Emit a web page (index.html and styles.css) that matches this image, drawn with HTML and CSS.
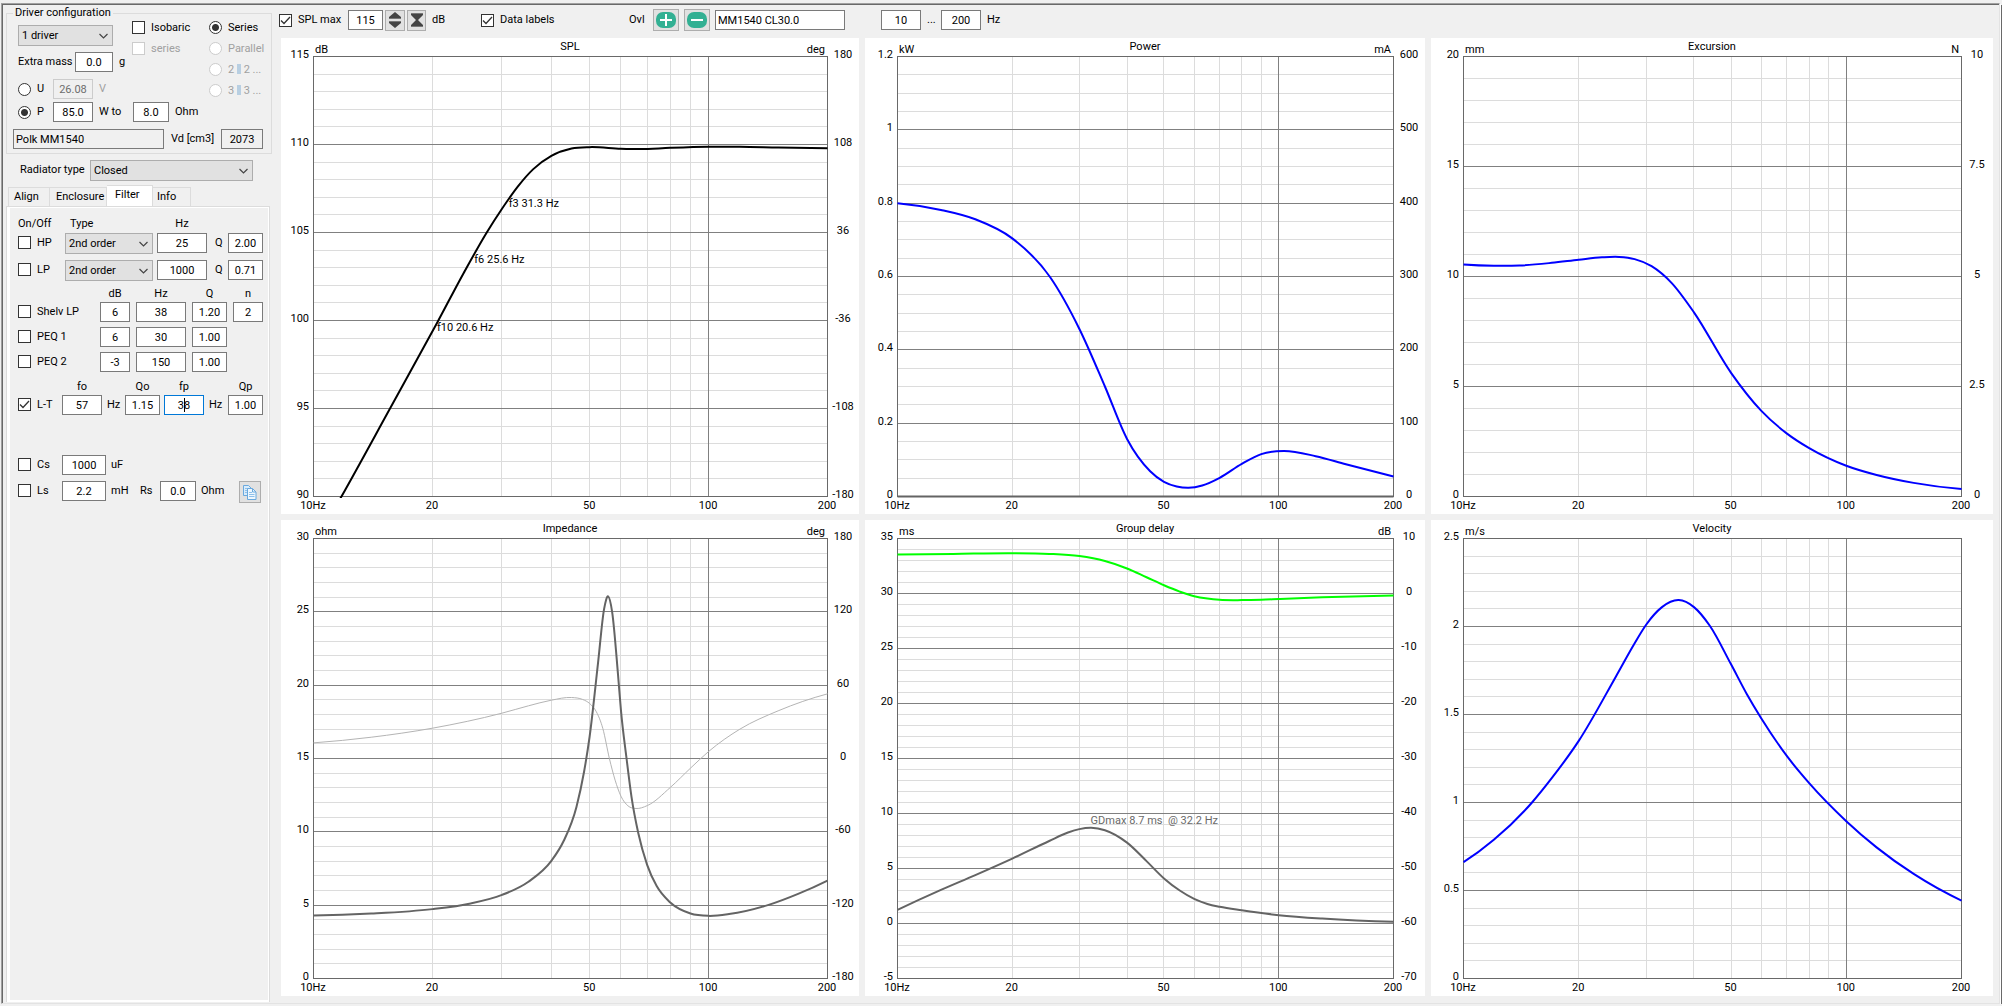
FILE: index.html
```html
<!DOCTYPE html>
<html lang="en">
<head>
    <meta charset="UTF-8">
    <meta name="viewport" content="width=device-width, initial-scale=1.0">
    <title>Speaker box simulator</title>
    <link rel="stylesheet" href="styles.css">
</head>
<body>
    <div class="window">
        <!-- Left side: driver settings and filter tab -->
        <aside class="sidebar">
            <fieldset class="driver">
                <legend>Driver configuration</legend>
                <div class="driver-top">
                    <div class="driver-main">
                        <div class="driver-head">
                            <div class="driver-count">
                                <select class="w-95" aria-label="Drivers"><option>1 driver</option></select>
                                <div class="row">
                                    <label class="mass-label" for="mass">Extra mass</label>
                                    <input class="box w-38" type="text" id="mass" value="0.0">
                                    <span class="unit">g</span>
                                </div>
                            </div>
                            <div class="stack">
                                <label class="check"><input type="checkbox">Isobaric</label>
                                <label class="check off"><input type="checkbox" disabled>series</label>
                            </div>
                        </div>
                        <div class="row level">
                            <label class="check w-35"><input type="radio" name="level">U</label>
                            <input class="box w-40" type="text" value="26.08" aria-label="Voltage" disabled>
                            <span class="unit off">V</span>
                        </div>
                        <div class="row power">
                            <label class="check w-35"><input type="radio" name="level" checked>P</label>
                            <input class="box w-40" type="text" value="85.0" aria-label="Power">
                            <span class="unit w-40">W to</span>
                            <input class="box w-36" type="text" value="8.0" aria-label="Load">
                            <span class="unit">Ohm</span>
                        </div>
                    </div>
                    <div class="stack">
                        <label class="check"><input type="radio" name="wiring" checked>Series</label>
                        <label class="check off"><input type="radio" name="wiring" disabled>Parallel</label>
                        <label class="check off"><input type="radio" name="wiring" disabled><span>2 <i class="bars"></i> 2 ...</span></label>
                        <label class="check off"><input type="radio" name="wiring" disabled><span>3 <i class="bars"></i> 3 ...</span></label>
                    </div>
                </div>
                <div class="row driver-name">
                    <input class="box readonly wide" type="text" value="Polk MM1540" aria-label="Driver name" readonly>
                    <label for="vd">Vd [cm3]</label>
                    <input class="box readonly w-42" type="text" id="vd" value="2073" readonly>
                </div>
            </fieldset>

            <div class="row radiator">
                <label for="radiator">Radiator type</label>
                <select class="w-163" id="radiator"><option>Closed</option></select>
            </div>

            <div class="tabs" role="tablist">
                <button class="tab" role="tab">Align</button>
                <button class="tab" role="tab">Enclosure</button>
                <button class="tab active" role="tab">Filter</button>
                <button class="tab" role="tab">Info</button>
            </div>

            <div class="tab-page">
                <div class="grid pass">
                    <span class="head start">On/Off</span><span class="head type">Type</span>
                    <span class="head">Hz</span><span></span><span></span>

                    <label class="check"><input type="checkbox">HP</label>
                    <select class="w-88" aria-label="HP type"><option>2nd order</option></select>
                    <input class="box" type="text" value="25" aria-label="HP Hz">
                    <label class="q" for="hpq">Q</label>
                    <input class="box" type="text" id="hpq" value="2.00">

                    <label class="check"><input type="checkbox">LP</label>
                    <select class="w-88" aria-label="LP type"><option>2nd order</option></select>
                    <input class="box" type="text" value="1000" aria-label="LP Hz">
                    <label class="q" for="lpq">Q</label>
                    <input class="box" type="text" id="lpq" value="0.71">
                </div>

                <div class="grid peq">
                    <span></span><span class="head">dB</span><span class="head">Hz</span>
                    <span class="head">Q</span><span class="head">n</span>

                    <label class="check"><input type="checkbox">Shelv LP</label>
                    <input class="box" type="text" value="6" aria-label="Shelv dB">
                    <input class="box" type="text" value="38" aria-label="Shelv Hz">
                    <input class="box" type="text" value="1.20" aria-label="Shelv Q">
                    <input class="box" type="text" value="2" aria-label="Shelv n">

                    <label class="check"><input type="checkbox">PEQ 1</label>
                    <input class="box" type="text" value="6" aria-label="PEQ 1 dB">
                    <input class="box" type="text" value="30" aria-label="PEQ 1 Hz">
                    <input class="box" type="text" value="1.00" aria-label="PEQ 1 Q">
                    <span></span>

                    <label class="check"><input type="checkbox">PEQ 2</label>
                    <input class="box" type="text" value="-3" aria-label="PEQ 2 dB">
                    <input class="box" type="text" value="150" aria-label="PEQ 2 Hz">
                    <input class="box" type="text" value="1.00" aria-label="PEQ 2 Q">
                    <span></span>
                </div>

                <div class="grid linkwitz">
                    <span></span><label class="head" for="fo">fo</label><span></span>
                    <label class="head" for="qo">Qo</label><span></span><label class="head" for="fp">fp</label>
                    <span></span><label class="head" for="qp">Qp</label>

                    <label class="check"><input type="checkbox" checked>L-T</label>
                    <input class="box" type="text" id="fo" value="57">
                    <span class="unit">Hz</span>
                    <input class="box" type="text" id="qo" value="1.15">
                    <span></span>
                    <span class="editing"><input class="box" type="text" id="fp" value="38"></span>
                    <span class="unit">Hz</span>
                    <input class="box" type="text" id="qp" value="1.00">
                </div>

                <div class="grid passive">
                    <label class="check"><input type="checkbox">Cs</label>
                    <input class="box" type="text" value="1000" aria-label="Cs">
                    <span class="unit">uF</span>
                    <span></span><span></span><span></span><span></span>

                    <label class="check"><input type="checkbox">Ls</label>
                    <input class="box" type="text" value="2.2" aria-label="Ls">
                    <span class="unit">mH</span>
                    <label for="rs">Rs</label>
                    <input class="box" type="text" id="rs" value="0.0">
                    <span class="unit">Ohm</span>
                    <button class="tool copy" aria-label="Copy">
                        <svg width="16" height="16" viewBox="0 0 16 16">
                            <path d="M1.5 1.5h5l3 3v7h-8z" fill="#d9ecfb" stroke="#6aa9de"/>
                            <path d="M3 4.5h3M3 6.5h3M3 8.5h3" stroke="#8fc0ea"/>
                            <path d="M5.5 4.5h5l3.5 3.5v7.5h-8.5z" fill="#eef7fe" stroke="#6aa9de"/>
                            <path d="M10.5 4.5v3.500h3.500" fill="none" stroke="#6aa9de"/>
                            <path d="M7 8.500h3M7 10.500h5.500M7 12.500h5.500" stroke="#8fc0ea"/>
                        </svg>
                    </button>
                </div>
            </div>
        </aside>

        <!-- Right side: toolbar and graphs -->
        <main class="main">
            <div class="toolbar">
                <label class="check splmax"><input type="checkbox" checked>SPL max</label>
                <input class="box w-35" type="text" value="115" aria-label="SPL max value">
                <button class="tool spin" aria-label="Step">
                    <svg width="14" height="16" viewBox="0 0 14 16"><path d="M7 0l6 5v2H1V5zM7 16l6-5V9H1v2z" fill="#444"/><path d="M1 6.500h12M1 9.500h12" stroke="#777"/></svg>
                </button>
                <button class="tool fit" aria-label="Fit">
                    <svg width="14" height="16" viewBox="0 0 14 16"><path d="M1 1h12v2L8 8l5 5v2H1v-2l5-5-5-5z" fill="#444"/><path d="M1 1.500h12M1 14.500h12" stroke="#777"/></svg>
                </button>
                <span class="db">dB</span>
                <label class="check datalabels"><input type="checkbox" checked>Data labels</label>
                <span class="ovl">Ovl</span>
                <button class="tool round" aria-label="Add overlay">
                    <svg width="20" height="16" viewBox="0 0 20 16"><rect width="20" height="16" rx="7" fill="#32b093"/><path d="M10 2v12M4 8h12" stroke="#fff" stroke-width="2"/></svg>
                </button>
                <button class="tool round" aria-label="Remove overlay">
                    <svg width="20" height="16" viewBox="0 0 20 16"><rect width="20" height="16" rx="7" fill="#32b093"/><path d="M4 8h12" stroke="#fff" stroke-width="2"/></svg>
                </button>
                <input class="box overlay-name" type="text" value="MM1540 CL30.0" aria-label="Overlay name">
                <input class="box w-40" type="text" value="10" aria-label="From Hz">
                <span class="dots">...</span>
                <input class="box w-40" type="text" value="200" aria-label="To Hz">
                <span class="unit">Hz</span>
            </div>
            <div class="charts">
                <svg class="chart" id="spl"></svg>
                <svg class="chart" id="power"></svg>
                <svg class="chart" id="excursion"></svg>
                <svg class="chart" id="impedance"></svg>
                <svg class="chart" id="delay"></svg>
                <svg class="chart" id="velocity"></svg>
            </div>
        </main>
    </div>
    <script src="charts.js"></script>
</body>
</html>
```
FILE: styles.css
```css
* {
    box-sizing: border-box;
}
body {
    margin: 0;
    background-color: #f0f0f0;
    color: #000;
}
body, input, select, button {
    font-family: Roboto, "Liberation Sans", sans-serif;
    font-size: 11px;
    line-height: 16px;
}
.window {
    display: flex;
    height: calc(100vh - 5px);
    min-height: 560px;
    margin: 3px 2px 0 1px;
    padding: 1px;
    border: 1px solid;
    border-color: #a0a0a0 #e3e3e3 #e3e3e3 #a0a0a0;
    box-shadow: inset 1px 1px #696969, 1px 1px #fff, 2px 2px #696969;
}

/* Form controls */
.box {
    width: 100%;
    height: 20px;
    padding: 0;
    border: 1px solid #7a7a7a;
    border-radius: 0;
    background-color: #fff;
    color: #000;
    text-align: center;
}
.box.readonly {
    background-color: #f0f0f0;
}
.box:disabled {
    border-color: #ccc;
    background-color: #f0f0f0;
    color: #6d6d6d;
}
select {
    appearance: none;
    height: 21px;
    padding: 0 18px 0 3px;
    border: 1px solid #adadad;
    border-radius: 0;
    background: #e1e1e1 url("data:image/svg+xml,%3Csvg xmlns='http://www.w3.org/2000/svg' width='9' height='6'%3E%3Cpath d='M.5 1l4 4 4-4' fill='none' stroke='%23444' stroke-width='1.200'/%3E%3C/svg%3E") no-repeat right 4px center;
    color: #000;
}
.check {
    display: flex;
    align-items: center;
    gap: 6px;
    height: 13px;
    white-space: nowrap;
}
.check input {
    appearance: none;
    flex: none;
    width: 13px;
    height: 13px;
    margin: 0;
    border: 1px solid #333;
    background: #fff no-repeat center;
}
.check input[type="radio"] {
    border-radius: 50%;
}
.check input[type="checkbox"]:checked {
    background-image: url("data:image/svg+xml,%3Csvg xmlns='http://www.w3.org/2000/svg' width='11' height='11'%3E%3Cpath d='M1 5.500l3 3L10 2' fill='none' stroke='%23333' stroke-width='1.300'/%3E%3C/svg%3E");
}
.check input[type="radio"]:checked {
    background-image: radial-gradient(circle, #333 3px, #fff 4px);
}
.check input:disabled {
    border-color: #ccc;
}
.off {
    color: #a0a0a0;
}
.bars {
    display: inline-block;
    width: 4px;
    height: 10px;
    background-color: #b8cfe2;
    vertical-align: -1px;
}
.row {
    display: flex;
}
.row > label, .row > span {
    line-height: 20px;
    height: 20px;
    white-space: nowrap;
}
.unit {
    padding-left: 6px;
    white-space: nowrap;
}
.w-35 { width: 35px; flex: none; }
.w-36 { width: 36px; flex: none; }
.w-38 { width: 38px; flex: none; }
.w-40 { width: 40px; flex: none; }
.w-42 { width: 42px; flex: none; }
.w-88 { width: 88px; }
.w-95 { width: 95px; }
.w-163 { width: 163px; }
.tool {
    display: flex;
    align-items: center;
    justify-content: center;
    flex: none;
    padding: 0;
    border: 1px solid #adadad;
    background-color: #e1e1e1;
}

/* Sidebar */
.sidebar {
    display: flex;
    flex-direction: column;
    flex: none;
    width: 276px;
    padding-left: 3px;
}
.driver {
    width: 266px;
    margin: 0;
    padding: 0 0 4px 6px;
    border: 1px solid #dcdcdc;
}
.driver legend {
    padding: 0 2px;
}
.driver-top {
    display: flex;
    padding-left: 5px;
}
.driver-main {
    width: 191px;
}
.driver-head {
    display: flex;
}
.driver-count {
    display: flex;
    flex-direction: column;
    gap: 6px;
    width: 114px;
    padding-top: 4px;
}
.mass-label {
    width: 57px;
}
.stack {
    display: flex;
    flex-direction: column;
    gap: 8px;
}
.level {
    margin-top: 7px;
}
.power {
    margin-top: 3px;
}
.driver-name {
    justify-content: space-between;
    margin-top: 7px;
    padding-right: 8px;
}
.wide {
    width: 151px;
    padding-left: 2px;
    text-align: left;
}
.radiator {
    margin-top: 6px;
    padding-left: 14px;
}
.radiator label {
    width: 70px;
}
.tabs {
    display: flex;
    align-items: flex-end;
    margin-top: 4px;
    padding-left: 2px;
}
.tab {
    height: 19px;
    border: 1px solid #dcdcdc;
    border-width: 1px 1px 0 0;
    background-color: #f0f0f0;
    color: #000;
    text-align: left;
}
.tab:nth-child(1) { width: 42px; border-left-width: 1px; padding: 0 5px; }
.tab:nth-child(2) { width: 57px; padding: 0 6px; }
.tab:nth-child(3) { width: 46px; padding: 0 8px; }
.tab:nth-child(4) { width: 38px; padding: 0 4px; }
.tab.active {
    height: 21px;
    background-color: #fff;
    padding-bottom: 3px;
}
.tab-page {
    flex: 1;
    width: 264px;
    padding: 9px 6px 0 11px;
    border: 1px solid #dcdcdc;
    border-bottom: 0;
    box-shadow: inset 3px 1px #fff, inset -1px -2px #fff;
}
.grid {
    display: grid;
    align-items: start;
}
.grid > .check {
    height: 19px;
}
.grid > .unit {
    padding-left: 5px;
    line-height: 20px;
}
.head {
    text-align: center;
}
.head.start {
    text-align: left;
}
.head.type {
    padding-left: 5px;
    text-align: left;
}
.pass {
    grid-template-columns: 47px 92px 50px 21px 35px;
    grid-template-rows: 17px 21px 21px;
}
.pass > :nth-child(n+11) {
    margin-top: 6px;
}
.q {
    padding-left: 8px;
    line-height: 20px;
}
.peq {
    grid-template-columns: 76px 30px 50px 35px 30px;
    grid-template-rows: 11px;
    gap: 5px 6px;
    margin-top: 11px;
}
.linkwitz {
    grid-template-columns: 44px 40px 23px 35px 4px 40px 24px 35px;
    margin-top: 7px;
}
.editing {
    position: relative;
}
.editing .box {
    display: block;
    border-color: #0078d7;
}
.editing::after {
    content: "";
    position: absolute;
    left: 20px;
    top: 3px;
    width: 1px;
    height: 14px;
    background-color: #000;
}
.passive {
    grid-template-columns: 44px 44px 34px 20px 36px 43px 22px;
    row-gap: 6px;
    margin-top: 40px;
}
.passive label {
    line-height: 20px;
}
.copy {
    width: 22px;
    height: 22px;
}

/* Toolbar */
.main {
    display: flex;
    flex-direction: column;
    flex: 1;
    min-width: 0;
}
.toolbar {
    display: flex;
    align-items: center;
    height: 33px;
    padding-bottom: 3px;
    white-space: nowrap;
}
.splmax {
    width: 69px;
}
.spin {
    width: 20px;
    height: 21px;
    margin-left: 2px;
}
.fit {
    width: 19px;
    height: 21px;
    margin: 0 6px 0 2px;
}
.db {
    width: 49px;
}
.datalabels {
    width: 148px;
}
.ovl {
    width: 24px;
}
.round {
    width: 26px;
    height: 22px;
    margin-right: 5px;
}
.overlay-name {
    width: 130px;
    margin-right: 36px;
    padding-left: 2px;
    text-align: left;
}
.dots {
    width: 20px;
    padding-left: 6px;
}

/* Graphs */
.charts {
    display: grid;
    flex: 1;
    min-height: 0;
    grid-template-columns: 578fr 560fr 562fr;
    grid-template-rows: 1fr 1fr;
    gap: 6px;
    padding: 0 5px 6px 2px;
}
.chart {
    display: block;
    width: 100%;
    height: 100%;
    min-width: 0;
    min-height: 0;
    background-color: #fff;
}
.chart text {
    fill: #000;
}
.chart .note-gray {
    fill: #696969;
}
.chart path, .chart rect {
    fill: none;
}
.minor {
    stroke: #dcdcdc;
}
.major {
    stroke: #808080;
}
.frame {
    stroke: #696969;
}
.black { stroke: #000; stroke-width: 2; }
.blue { stroke: #0000ff; stroke-width: 2; }
.green { stroke: #00ff00; stroke-width: 2; }
.gray { stroke: #646464; stroke-width: 2; }
.thin { stroke: #b4b4b4; stroke-width: 1; }
```
FILE: charts.js
```js
const FMIN = 10;
const FMAX = 200;
const PAD = { top: 18, right: 32, bottom: 18, left: 32 };

// Curve points are [frequency, value on the curve's own axis]
const charts = {
    spl: {
        title: "SPL", units: ["dB", "deg"], min: 90, max: 115, major: 5, minor: 1,
        right: [180, 108, 36, -36, -108, -180],
        curves: [{ cls: "black", pts: [[11.5, 89.6], [11.77, 90], [15.62, 95], [20.59, 99.9], [24, 102.7], [27.45, 105], [30, 106.35], [33, 107.65], [36, 108.6], [40, 109.35], [45, 109.77], [50, 109.85], [60, 109.76], [67, 109.74], [80, 109.81], [100, 109.87], [120, 109.87], [150, 109.83], [200, 109.79]] }],
        notes: [[31.3, 106.8, 3, "f3 31.3 Hz"], [25.6, 103.7, 4, "f6 25.6 Hz"], [20.6, 99.8, 3, "f10 20.6 Hz"]]
    },
    power: {
        title: "Power", units: ["kW", "mA"], min: 0, max: 1.2, major: 0.2, minor: 0.05,
        right: [600, 500, 400, 300, 200, 100, 0],
        curves: [
            { cls: "gray", pts: [[10, 0], [200, 0]] },
            { cls: "blue", pts: [[10, 0.8], [13, 0.7815], [16, 0.756], [20, 0.704], [25.15, 0.598], [30, 0.457], [35, 0.3], [40, 0.157], [46, 0.069], [50, 0.04], [54, 0.0273], [58, 0.0237], [63, 0.03], [70, 0.051], [80, 0.089], [90, 0.1157], [103, 0.124], [125, 0.11], [150, 0.088], [200, 0.0546]] }
        ]
    },
    excursion: {
        title: "Excursion", units: ["mm", "N"], min: 0, max: 20, major: 5, minor: 1,
        right: [10, 7.5, 5, 2.5, 0],
        curves: [{ cls: "blue", pts: [[10, 10.55], [12, 10.49], [14, 10.5], [17, 10.62], [20, 10.76], [23, 10.87], [25.5, 10.89], [28, 10.79], [31, 10.47], [35, 9.7], [40, 8.37], [50, 5.62], [60, 3.89], [70, 2.86], [80, 2.2], [100, 1.4], [120, 0.98], [150, 0.62], [200, 0.34]] }]
    },
    impedance: {
        title: "Impedance", units: ["ohm", "deg"], min: 0, max: 30, major: 5, minor: 1,
        right: [180, 120, 60, 0, -60, -120, -180],
        curves: [
            { cls: "thin", min: -180, max: 180, pts: [[10, 12.8], [14, 17.4], [20, 24.8], [30, 37.1], [35, 43.1], [40, 47.7], [45, 49.9], [48, 48.3], [50, 45], [52, 38.2], [54, 24.5], [56.1, 0], [58, -17.7], [60, -30.8], [62.5, -38.7], [65.5, -40.9], [70, -38.5], [80, -23.7], [90, -7.9], [100, 5.7], [120, 24], [150, 39], [200, 52.9]] },
            { cls: "gray", pts: [[10, 4.3], [14, 4.43], [20, 4.73], [25, 5.12], [30, 5.7], [35, 6.6], [40, 8.02], [43, 9.39], [46.3, 11.7], [48.4, 14.1], [50, 16.5], [52.5, 21.5], [54.4, 25.2], [55.7, 26.05], [57, 25], [59, 20.7], [60, 18.3], [62, 15], [63.8, 12.4], [66.4, 9.9], [69.9, 7.75], [73.9, 6.3], [80, 5.18], [90, 4.43], [100, 4.27], [112.7, 4.39], [141.9, 5.02], [168.5, 5.77], [200, 6.68]] }
        ]
    },
    delay: {
        title: "Group delay", units: ["ms", "dB"], min: -5, max: 35, major: 5, minor: 1,
        right: [10, 0, -10, -20, -30, -40, -50, -60, -70],
        curves: [
            { cls: "green", min: -70, max: 10, pts: [[10, 7.09], [14, 7.2], [20, 7.33], [25, 7.2], [30, 6.8], [35, 5.9], [40, 4.55], [45, 2.95], [50, 1.5], [55, 0.35], [60, -0.5], [65, -0.93], [70, -1.15], [80, -1.2], [90, -1.13], [100, -1], [130, -0.7], [200, -0.36]] },
            { cls: "gray", pts: [[10, 1.24], [13, 3.05], [16, 4.4], [20, 5.9], [25, 7.5], [28, 8.27], [30, 8.58], [32.2, 8.7], [35, 8.48], [40, 7.35], [45, 5.67], [50, 4.1], [55, 3], [60, 2.24], [65, 1.78], [70, 1.52], [80, 1.2], [100, 0.76], [130, 0.45], [160, 0.28], [200, 0.16]] }
        ],
        notes: [[32.2, 8.7, -7, "GDmax 8.7 ms \u00a0@ 32.2 Hz", "note-gray"]]
    },
    velocity: {
        title: "Velocity", units: ["m/s", ""], min: 0, max: 2.5, major: 0.5, minor: 0.1,
        right: [],
        curves: [{ cls: "blue", pts: [[10, 0.661], [12, 0.788], [15.1, 1], [17, 1.138], [20, 1.35], [25, 1.715], [28, 1.905], [30, 2.01], [33, 2.11], [36.5, 2.15], [40, 2.11], [44, 2.004], [50, 1.785], [55, 1.615], [60, 1.477], [70, 1.263], [80, 1.11], [100, 0.894], [120, 0.745], [150, 0.594], [200, 0.443]] }]
    }
};

function add(svg, tag, attrs, text) {
    const el = document.createElementNS("http://www.w3.org/2000/svg", tag);
    for (const key in attrs) el.setAttribute(key, attrs[key]);
    if (text !== undefined) el.textContent = text;
    svg.appendChild(el);
}

// Smooth path through the points, slopes weighted by the distance to each neighbour
function smooth(p) {
    const n = p.length - 1;
    const gap = [], slope = [];
    for (let i = 0; i < n; i++) {
        gap[i] = p[i + 1][0] - p[i][0];
        slope[i] = (p[i + 1][1] - p[i][1]) / gap[i];
    }
    const m = p.map((_, i) => {
        if (i === 0 || i === n) return 0;
        return (gap[i] * slope[i - 1] + gap[i - 1] * slope[i]) / (gap[i - 1] + gap[i]);
    });
    m[0] = n > 1 ? 2 * slope[0] - m[1] : slope[0];
    m[n] = n > 1 ? 2 * slope[n - 1] - m[n - 1] : slope[0];

    let d = `M${p[0][0]} ${p[0][1]}`;
    for (let i = 0; i < n; i++) {
        const dx = gap[i] / 3;
        d += `C${p[i][0] + dx} ${p[i][1] + m[i] * dx} ${p[i + 1][0] - dx} ${p[i + 1][1] - m[i + 1] * dx} ${p[i + 1][0]} ${p[i + 1][1]}`;
    }
    return d;
}

function draw(id) {
    const c = charts[id];
    const svg = document.getElementById(id);
    const w = Math.round(svg.getBoundingClientRect().width);
    const h = Math.round(svg.getBoundingClientRect().height);
    const x0 = PAD.left, x1 = w - PAD.right, y0 = PAD.top, y1 = h - PAD.bottom;
    const X = f => x0 + (x1 - x0) * Math.log(f / FMIN) / Math.log(FMAX / FMIN);
    const Y = (v, min = c.min, max = c.max) => y1 - (y1 - y0) * (v - min) / (max - min);
    const snap = n => Math.round(n - 0.01) + 0.5;
    svg.innerHTML = "";

    // Grid, thin lines first
    const steps = Math.round((c.max - c.min) / c.minor);
    const every = Math.round(c.major / c.minor);
    for (let i = 1; i < steps; i++) {
        if (i % every) add(svg, "path", { class: "minor", d: `M${x0} ${snap(Y(c.min + i * c.minor))}H${x1}` });
    }
    for (let f = 20; f < 100; f += 10) {
        add(svg, "path", { class: "minor", d: `M${snap(X(f))} ${y0}V${y1}` });
    }
    for (let i = every; i < steps; i += every) {
        add(svg, "path", { class: "major", d: `M${x0} ${snap(Y(c.min + i * c.minor))}H${x1}` });
    }
    add(svg, "path", { class: "major", d: `M${snap(X(100))} ${y0}V${y1}` });
    add(svg, "rect", { class: "frame", x: x0 + 0.5, y: y0 + 0.5, width: x1 - x0, height: y1 - y0 });

    // Curves are cut off at the plot frame
    add(svg, "clipPath", { id: id + "-clip" });
    add(svg.lastChild, "rect", { x: x0, y: y0, width: x1 - x0 + 1, height: y1 - y0 + 2 });
    for (const curve of c.curves) {
        const pts = curve.pts.map(([f, v]) => [X(f) + 0.5, Y(v, curve.min, curve.max) + 0.5]);
        add(svg, "path", { class: curve.cls, d: smooth(pts), "clip-path": `url(#${id}-clip)` });
    }

    // Labels, y is the baseline
    add(svg, "text", { x: w / 2, y: 12, "text-anchor": "middle" }, c.title);
    add(svg, "text", { x: x0 + 2, y: 15 }, c.units[0]);
    add(svg, "text", { x: x1 - 2, y: 15, "text-anchor": "end" }, c.units[1]);
    for (let i = 0; i <= steps; i += every) {
        add(svg, "text", { x: x0 - 4, y: Math.round(Y(c.min + i * c.minor)) + 2, "text-anchor": "end" }, +(c.min + i * c.minor).toFixed(2));
    }
    c.right.forEach((label, i) => {
        add(svg, "text", { x: x1 + 16, y: Math.round(y0 + (y1 - y0) * i / (c.right.length - 1)) + 2, "text-anchor": "middle" }, label);
    });
    for (const f of [10, 20, 50, 100, 200]) {
        add(svg, "text", { x: X(f), y: y1 + 13, "text-anchor": "middle" }, f === 10 ? "10Hz" : f);
    }
    for (const [f, v, dy, text, cls] of c.notes || []) {
        add(svg, "text", { x: X(f), y: Math.round(Y(v)) + dy + 4, class: cls || "" }, text);
    }
}

function drawAll() {
    Object.keys(charts).forEach(draw);
}

drawAll();
window.addEventListener("resize", drawAll);
```
